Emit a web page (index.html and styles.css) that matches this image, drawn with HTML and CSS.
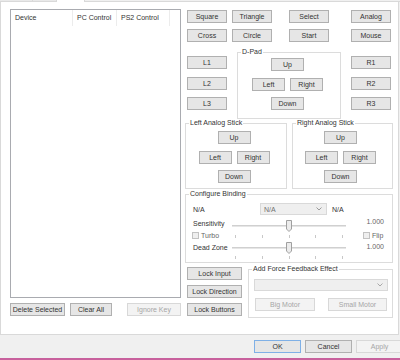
FILE: index.html
```html
<!DOCTYPE html>
<html lang="en">
<head>
    <meta charset="UTF-8">
    <title>Pad Configuration</title>
    <link rel="stylesheet" href="styles.css">
</head>
<body>
<div class="window">

    <div class="tabbar">
        <div class="tab tab-first"></div>
        <div class="tab tab-second"></div>
        <div class="tab-active"></div>
        <div class="tab-rest"></div>
    </div>

    <div class="panel">

        <!-- bindings list -->
        <div class="left-col">
            <div class="list">
                <div class="list-head">
                    <span class="col col-device">Device</span>
                    <span class="col col-pc">PC Control</span>
                    <span class="col col-ps2">PS2 Control</span>
                </div>
            </div>
            <div class="list-buttons">
                <button class="btn w-delete">Delete Selected</button>
                <button class="btn w-clear">Clear All</button>
                <button class="btn w-ignore" disabled>Ignore Key</button>
            </div>
        </div>

        <div class="right-col">
            <div class="face-row">
                <button class="btn w40">Square</button>
                <button class="btn w40">Triangle</button>
                <button class="btn w40">Select</button>
                <button class="btn w40">Analog</button>
            </div>
            <div class="face-row second">
                <button class="btn w40">Cross</button>
                <button class="btn w40">Circle</button>
                <button class="btn w40">Start</button>
                <button class="btn w40">Mouse</button>
            </div>

            <div class="shoulder-area">
                <div class="shoulder-col">
                    <button class="btn">L1</button>
                    <button class="btn">L2</button>
                    <button class="btn">L3</button>
                </div>
                <fieldset class="group">
                    <legend>D-Pad</legend>
                    <div class="cross dpad-body">
                        <button class="btn w33">Up</button>
                        <div class="pair">
                            <button class="btn w33">Left</button>
                            <button class="btn w33">Right</button>
                        </div>
                        <button class="btn w33">Down</button>
                    </div>
                </fieldset>
                <div class="shoulder-col">
                    <button class="btn">R1</button>
                    <button class="btn">R2</button>
                    <button class="btn">R3</button>
                </div>
            </div>

            <div class="sticks">
                <fieldset class="group">
                    <legend>Left Analog Stick</legend>
                    <div class="cross stick-body">
                        <button class="btn w33">Up</button>
                        <div class="pair">
                            <button class="btn w33">Left</button>
                            <button class="btn w33">Right</button>
                        </div>
                        <button class="btn w33">Down</button>
                    </div>
                </fieldset>
                <fieldset class="group">
                    <legend>Right Analog Stick</legend>
                    <div class="cross stick-body">
                        <button class="btn w33">Up</button>
                        <div class="pair">
                            <button class="btn w33">Left</button>
                            <button class="btn w33">Right</button>
                        </div>
                        <button class="btn w33">Down</button>
                    </div>
                </fieldset>
            </div>

            <fieldset class="group binding">
                <legend>Configure Binding</legend>
                <div class="binding-body">
                    <div class="binding-top">
                        <span class="binding-name">N/A</span>
                        <div class="combo combo-small">
                            <span>N/A</span>
                            <svg class="chevron" width="6" height="4" viewBox="0 0 6 4"><polyline points="0.5,0.5 3,3 5.5,0.5" fill="none" stroke="#9a9a9a" stroke-width="1"/></svg>
                        </div>
                        <span class="binding-ps2">N/A</span>
                    </div>

                    <div class="sliders">
                        <span class="lbl lbl-sens">Sensitivity</span>
                        <div class="slider">
                            <svg width="6" height="12" viewBox="0 0 6 12"><polygon points="0.5,0.5 5.5,0.5 5.5,9 3,11.5 0.5,9" fill="#ececec" stroke="#a0a0a0"/></svg>
                        </div>
                        <span class="val val-sens">1.000</span>

                        <label class="check"><span class="box"></span>Turbo</label>
                        <div class="ticks ticks-sens"><i></i><i></i><i></i><i></i><i></i></div>
                        <label class="check flip"><span class="box"></span>Flip</label>

                        <span class="lbl lbl-dead">Dead Zone</span>
                        <div class="slider">
                            <svg width="6" height="12" viewBox="0 0 6 12"><polygon points="0.5,0.5 5.5,0.5 5.5,9 3,11.5 0.5,9" fill="#ececec" stroke="#a0a0a0"/></svg>
                        </div>
                        <span class="val val-dead">1.000</span>

                        <span></span>
                        <div class="ticks ticks-dead"><i></i><i></i><i></i><i></i><i></i></div>
                        <span></span>
                    </div>
                </div>
            </fieldset>

            <div class="bottom-area">
                <div class="lock-col">
                    <button class="btn">Lock Input</button>
                    <button class="btn">Lock Direction</button>
                    <button class="btn">Lock Buttons</button>
                </div>
                <fieldset class="group">
                    <legend>Add Force Feedback Effect</legend>
                    <div class="ff-body">
                        <div class="combo combo-wide">
                            <span></span>
                            <svg class="chevron" width="6" height="4" viewBox="0 0 6 4"><polyline points="0.5,0.5 3,3 5.5,0.5" fill="none" stroke="#a8a8a8" stroke-width="1"/></svg>
                        </div>
                        <div class="motor-row">
                            <button class="btn w-big" disabled>Big Motor</button>
                            <button class="btn w-small" disabled>Small Motor</button>
                        </div>
                    </div>
                </fieldset>
            </div>
        </div>
    </div>

    <div class="footer">
        <button class="btn w47 btn-default">OK</button>
        <button class="btn w47">Cancel</button>
        <button class="btn w47" disabled>Apply</button>
    </div>
    <div class="edge"></div>
</div>
</body>
</html>
```

FILE: styles.css
```css
body {
    margin: 0;
    background-color: #f0f0f0;
    font-family: "Liberation Sans", Arial, sans-serif;
    font-size: 7px;
    color: #333;
}
.window {
    width: 400px;
    height: 360px;
    overflow: hidden;
}

/* tab strip */
.tabbar {
    display: flex;
    height: 2px;
}
.tab {
    height: 1px;
    background-color: #e9e9e9;
    border-right: 1px solid #d9d9d9;
    border-bottom: 1px solid #d9d9d9;
}
.tab-first { width: 32px; }
.tab-second { width: 23px; }
.tab-active {
    width: 27px;
    height: 2px;
    background-color: #fff;
    border-right: 1px solid #d9d9d9;
}
.tab-rest {
    flex: 1;
    height: 1px;
    border-bottom: 1px solid #d9d9d9;
}

.panel {
    display: flex;
    align-items: flex-start;
    width: 399px;
    height: 333px;
    box-sizing: border-box;
    background-color: #fff;
    border: 1px solid #d9d9d9;
    border-top: 0;
}

/* buttons */
.btn {
    display: block;
    height: 13px;
    box-sizing: border-box;
    margin: 0;
    padding: 0;
    border: 1px solid #b0b0b0;
    background-color: #e6e6e6;
    font: inherit;
    line-height: 11px;
    color: #333;
    text-align: center;
    white-space: nowrap;
}
.btn:disabled {
    background-color: #f3f3f3;
    border-color: #d8d8d8;
    color: #a6a6a6;
}
.btn-default {
    border-color: #7fb0e6;
}
.w33 { width: 33px; }
.w40 { width: 40px; }
.w47 { width: 47px; flex: none; }

/* left side */
.left-col {
    width: 171px;
    margin-top: 7px;
    padding-left: 9px;
}
.list {
    height: 289px;
    box-sizing: border-box;
    border: 1px solid #a9abb0;
}
.list-head {
    display: flex;
    height: 16px;
}
.col {
    box-sizing: border-box;
    padding-left: 4px;
    line-height: 16px;
    border-right: 1px solid #ececec;
}
.col-device { width: 62px; }
.col-pc { width: 44px; }
.col-ps2 { width: 53px; }
.list-buttons {
    display: flex;
    gap: 5px;
    margin-top: 5px;
}
.w-delete { width: 55px; }
.w-clear { width: 42px; }
.w-ignore { width: 54px; margin-left: auto; }

/* right side */
.right-col {
    width: 208px;
    margin-top: 8px;
    margin-left: 4px;
}
.face-row {
    display: grid;
    grid-template-columns: 45px 57px 62px 40px;
    padding-left: 2px;
}
.face-row.second {
    margin-top: 6px;
}

.group {
    min-width: 0;
    margin: 0;
    padding: 0;
    border: 1px solid #dcdcdc;
}
.group legend {
    margin-left: 3px;
    padding: 0 1px;
    line-height: 8px;
}

.shoulder-area {
    display: grid;
    grid-template-columns: 40px 104px 40px;
    column-gap: 10px;
    align-items: start;
    margin-top: 6px;
    padding-left: 2px;
}
.shoulder-col {
    display: flex;
    flex-direction: column;
    gap: 7.5px;
    padding-top: 8px;
}
.cross {
    display: flex;
    flex-direction: column;
    align-items: center;
    gap: 6.5px;
}
.pair {
    display: flex;
    gap: 5px;
}
.dpad-body {
    padding: 2px 3px 8px 0;
}

.sticks {
    display: grid;
    grid-template-columns: 102px 101px;
    column-gap: 5px;
}
.stick-body {
    padding: 4px 4px 5px 0;
}

/* configure binding */
.binding {
    margin-top: 1px;
}
.binding-body {
    padding: 5px 8px 3px 7px;
}
.binding-top {
    display: flex;
    align-items: center;
    height: 12px;
}
.binding-name {
    width: 67px;
}
.binding-ps2 {
    margin-left: 5px;
}
.combo {
    display: flex;
    align-items: center;
    justify-content: space-between;
    box-sizing: border-box;
    height: 12px;
    padding: 0 4px 0 3px;
    border: 1px solid #d9d9d9;
    background-color: #efefef;
    color: #707070;
}
.combo-small { width: 67px; }
.combo-wide { width: 134px; }

.sliders {
    display: grid;
    grid-template-columns: 39px 114px 1fr;
    grid-template-rows: 12px 10px 12px 5px;
    margin-top: 5px;
}
.lbl, .val {
    line-height: 8px;
}
.lbl-sens { align-self: start; }
.val-sens { align-self: start; justify-self: end; margin-top: -2px; color: #666; }
.lbl-dead { align-self: center; }
.val-dead { align-self: center; justify-self: end; margin-top: -2px; color: #666; }
.slider {
    display: flex;
    justify-content: center;
    background: linear-gradient(transparent 5px, #d0d0d0 5px, #d0d0d0 6px, #e6e6e6 6px, #e6e6e6 7px, transparent 7px);
}
.ticks {
    display: flex;
    justify-content: space-between;
    padding: 0 3px;
    height: 3px;
}
.ticks i {
    width: 1px;
    background-color: #c8c8c8;
}
.ticks-sens { margin-top: 3px; }
.ticks-dead { margin-top: 2px; }

.check {
    display: flex;
    align-items: center;
    gap: 2px;
    align-self: start;
    height: 7px;
    margin-left: -1px;
    color: #666;
}
.check.flip {
    margin-left: 17px;
}
.box {
    width: 7px;
    height: 7px;
    box-sizing: border-box;
    border: 1px solid #c2c2c2;
    background-color: #efefef;
}

/* lock + force feedback */
.bottom-area {
    display: grid;
    grid-template-columns: 55px 145px;
    column-gap: 6px;
    align-items: start;
    margin-top: 2px;
    padding-left: 2px;
}
.lock-col {
    display: flex;
    flex-direction: column;
    gap: 5px;
    padding-top: 2px;
}
.ff-body {
    padding: 6px 4px 6px 5px;
}
.motor-row {
    display: flex;
    justify-content: space-between;
    margin-top: 7px;
    padding: 0 1px;
}
.w-big { width: 60px; }
.w-small { width: 59px; }

/* dialog buttons */
.footer {
    display: flex;
    gap: 4px;
    height: 23px;
    box-sizing: border-box;
    padding: 5px 0 0 254px;
}
.edge {
    height: 2px;
    background-color: #c8619d;
}
```
